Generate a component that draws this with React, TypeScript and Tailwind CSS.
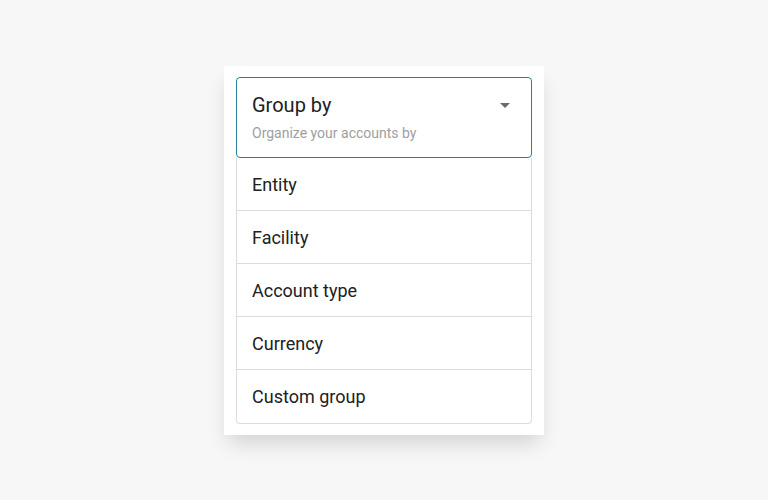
const OPTIONS = ["Entity", "Facility", "Account type", "Currency", "Custom group"]

export default function App() {
   return (
      <div className="w-[768px] h-[500px] bg-[#f7f7f7] flex justify-center pt-[66px] font-['Roboto',sans-serif]">
         <div className="w-[320px] h-[369px] bg-white px-3 pt-[11px] pb-[12px] shadow-[0_12px_20px_-4px_rgba(0,0,0,0.15)]">
            <div className="h-[81px] border border-[#2b7f99] rounded-[4px] px-[15px] pt-[14px] relative">
               <div className="text-[20px] leading-[26px] text-[#212121]">Group by</div>
               <div className="text-[14px] leading-[18px] text-[#9e9e9e] mt-[6px]">
                  Organize your accounts by
               </div>
               <div className="absolute right-[21px] top-[25px] w-0 h-0 border-l-[5px] border-r-[5px] border-t-[5px] border-l-transparent border-r-transparent border-t-[#6b6b6b]" />
            </div>
            <div className="border border-t-0 border-[#dcdcdc] rounded-b-[4px]">
               {OPTIONS.map((o, i) => (
                  <div
                     key={o}
                     className={`h-[53px] flex items-center px-[15px] text-[18px] text-[#212121] ${
                        i < OPTIONS.length - 1 ? "border-b border-[#dcdcdc]" : ""
                     }`}
                  >
                     {o}
                  </div>
               ))}
            </div>
         </div>
      </div>
   )
}
